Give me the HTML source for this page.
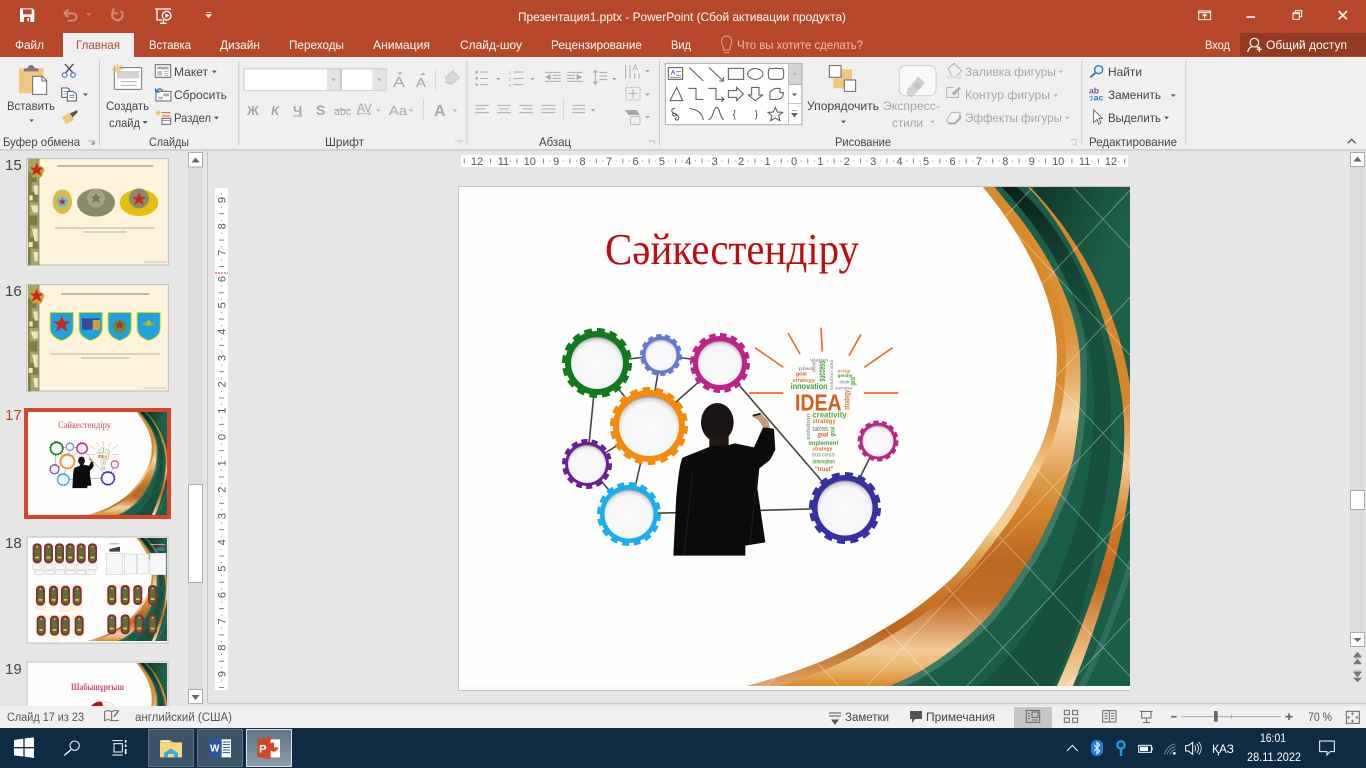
<!DOCTYPE html>
<html lang="ru"><head><meta charset="utf-8"><title>Презентация1.pptx - PowerPoint</title>
<style>
html,body{margin:0;padding:0;width:1366px;height:768px;overflow:hidden;background:#E6E6E6}
svg{display:block;font-family:"Liberation Sans","Noto Sans CJK SC",sans-serif}
.t{font-size:12px;fill:#444}
.g{font-size:12px;fill:#A6A6A6}
.w{font-size:12px;fill:#fff}
.r{font-size:11px;fill:#555;text-anchor:middle;paint-order:stroke;stroke:#fff;stroke-width:3px}
.s{font-size:12px;fill:#555}
</style></head><body>
<svg width="1366" height="768" viewBox="0 0 1366 768" xmlns="http://www.w3.org/2000/svg">
<defs>
<clipPath id="reg"><path d="M983,187 C1015,225 1057,290 1057,355 C1057,400 1048,437 1033,463 C1020,487 1008,510 993,528 C978,548 965,567 947,583 C928,600 908,615 887,627 C866,640 845,652 820,662 C795,672 770,680 747,686 L1130,686 L1130,187Z"/></clipPath>
<clipPath id="c19"><rect x="28" y="663" width="139" height="43"/></clipPath>
<linearGradient id="top" gradientUnits="userSpaceOnUse" x1="1040" y1="200" x2="1122" y2="232"><stop offset="0" stop-color="#113C2C"/><stop offset="1" stop-color="#1D6048"/></linearGradient>
<linearGradient id="dk" gradientUnits="userSpaceOnUse" x1="0" y1="187" x2="0" y2="320"><stop offset="0" stop-color="#0C2119"/><stop offset=".5" stop-color="#123F30"/><stop offset="1" stop-color="#16503C"/></linearGradient>
<linearGradient id="ls" gradientUnits="userSpaceOnUse" x1="0" y1="240" x2="0" y2="500"><stop offset="0" stop-color="#1B5E47"/><stop offset=".4" stop-color="#2F6E58"/><stop offset="1" stop-color="#417963"/></linearGradient>
<linearGradient id="gold" gradientUnits="userSpaceOnUse" x1="0" y1="187" x2="0" y2="686">
<stop offset="0" stop-color="#D98B2D"/><stop offset=".287" stop-color="#DC9238"/><stop offset=".387" stop-color="#E6AE6B"/><stop offset=".457" stop-color="#F6D5A5"/><stop offset=".527" stop-color="#EDB87A"/><stop offset=".587" stop-color="#DD9A48"/><stop offset=".647" stop-color="#D5862B"/><stop offset=".748" stop-color="#BC671F"/><stop offset=".828" stop-color="#C06C26"/><stop offset=".878" stop-color="#D9985F"/><stop offset=".928" stop-color="#F2CD98"/><stop offset=".964" stop-color="#E8B56F"/><stop offset="1" stop-color="#D98B2D"/></linearGradient>
<linearGradient id="strip" gradientUnits="userSpaceOnUse" x1="0" y1="187" x2="0" y2="686">
<stop offset="0" stop-color="#D88A2C"/><stop offset=".387" stop-color="#D88A2C"/><stop offset=".487" stop-color="#E39F50"/><stop offset=".567" stop-color="#F3C88F"/><stop offset=".687" stop-color="#F4CE9A"/><stop offset=".747" stop-color="#DD9A48"/><stop offset=".807" stop-color="#CC7C28"/><stop offset=".888" stop-color="#BD661E"/><stop offset=".948" stop-color="#C9813F"/><stop offset="1" stop-color="#E0A567"/></linearGradient>
<linearGradient id="arc" gradientUnits="userSpaceOnUse" x1="0" y1="187" x2="0" y2="686">
<stop offset="0" stop-color="#D6862B"/><stop offset=".43" stop-color="#D6862B"/><stop offset=".56" stop-color="#F2C78E"/><stop offset=".68" stop-color="#D07A25"/><stop offset=".79" stop-color="#C06A20"/><stop offset=".93" stop-color="#EDB77C"/><stop offset="1" stop-color="#F5D5A5"/></linearGradient>
<radialGradient id="hole" cx=".5" cy=".57" r=".57"><stop offset="0" stop-color="#FBFBFD"/><stop offset=".8" stop-color="#F6F6F9"/><stop offset=".92" stop-color="#D8D8DA"/><stop offset="1" stop-color="#8C8C8C"/></radialGradient>
<linearGradient id="pptb" x1="0" y1="0" x2="0" y2="1"><stop offset="0" stop-color="#5F7585"/><stop offset="1" stop-color="#8C9EAA"/></linearGradient>

<g id="bg">
<rect x="459" y="187" width="671" height="499" fill="#FEFEFD"/>
<g clip-path="url(#reg)">
<rect x="740" y="187" width="390" height="499" fill="#1B5E47"/>
<path d="M1028,187 L1130,187 L1130,387 L1128,380 C1118,310 1075,232 1028,187Z" fill="url(#top)"/>
<path d="M1000,187 L1017,187 C1060,225 1098,290 1108,370 C1115,430 1110,490 1098,530 L1075,530 C1090,480 1098,420 1092,370 C1085,300 1045,230 1000,187Z" fill="url(#dk)"/>
<path d="M1098,530 C1090,590 1075,640 1053,686 L980,686 C1015,655 1055,600 1075,530Z" fill="#164F3B"/>
<path d="M1082,686 C1105,640 1120,600 1132,560" fill="none" stroke="#2E7059" stroke-width="6"/>
<path d="M1030,187 C1075,232 1122,310 1132,400 C1140,480 1115,580 1073,686 L1057,686 C1095,600 1128,500 1124,420 C1118,330 1075,235 1028,187Z" fill="url(#arc)"/>
<path d="M993,187 C1030,225 1075,290 1080,355 C1082,400 1078,430 1073,460 C1068,475 1065,485 1060,497 C1050,520 1040,543 1027,563 C1012,585 1000,605 983,622 C965,640 947,655 927,667 C915,675 903,680 890,686" fill="none" stroke="url(#ls)" stroke-width="13"/>
<path d="M993,187 C1030,225 1075,290 1080,355 C1082,400 1078,430 1073,460 C1068,475 1065,485 1060,497 C1050,520 1040,543 1027,563 C1012,585 1000,605 983,622 C965,640 947,655 927,667 C915,675 903,680 890,686 L740,686 L740,187Z" fill="url(#gold)"/>
<path d="M983,187 C1015,225 1057,290 1057,355 C1057,400 1048,437 1033,463 C1020,487 1008,510 993,528 C978,548 965,567 947,583 C928,600 908,615 887,627 C866,640 845,652 820,662 C795,672 770,680 747,686" fill="none" stroke="url(#strip)" stroke-width="18"/>
<path d="M373,187L839,686M473,187L939,686M573,187L1039,686M673,187L1139,686M773,187L1239,686M873,187L1339,686M973,187L1439,686M1073,187L1539,686M1033,187L567,686M1133,187L667,686M1233,187L767,686M1333,187L867,686M1433,187L967,686M1533,187L1067,686M1633,187L1167,686" stroke="#fff" stroke-opacity=".34" stroke-width="1" fill="none"/>
</g></g>

<g id="art">
<path d="M597,363L661,355L720,363M597,363L649,426M661,355L649,426M720,363L649,426M597,363L587,464M587,464L649,426M587,464L629,514M649,426L629,514M629,514L845,508M720,363L845,508M845,508L878,441" stroke="#454545" stroke-width="1.6" fill="none"/>
<g fill="none"><circle cx="597" cy="363" r="33" stroke="#117A1C" stroke-width="4" pathLength="32" stroke-dasharray="1.200 .8"/><circle cx="661" cy="355" r="19.500" stroke="#6478D8" stroke-width="3" pathLength="28" stroke-dasharray="1.200 .8"/><circle cx="720" cy="363" r="28" stroke="#BE2487" stroke-width="4" pathLength="32" stroke-dasharray="1.200 .8"/><circle cx="649" cy="426" r="37" stroke="#F58A0B" stroke-width="4" pathLength="36" stroke-dasharray="1.200 .8"/><circle cx="587" cy="464" r="23" stroke="#6C1E94" stroke-width="4" pathLength="28" stroke-dasharray="1.200 .8"/><circle cx="629" cy="514" r="30" stroke="#1AAEEE" stroke-width="4" pathLength="32" stroke-dasharray="1.200 .8"/><circle cx="845" cy="508" r="34" stroke="#3730A5" stroke-width="4" pathLength="32" stroke-dasharray="1.200 .8"/><circle cx="878" cy="441" r="19" stroke="#BE2487" stroke-width="3" pathLength="28" stroke-dasharray="1.200 .8"/></g>
<circle cx="597" cy="363" r="32" fill="#117A1C"/><circle cx="597" cy="363" r="26" fill="url(#hole)"/>
<circle cx="661" cy="355" r="19" fill="#6478D8"/><circle cx="661" cy="355" r="15.500" fill="url(#hole)"/>
<circle cx="720" cy="363" r="27" fill="#BE2487"/><circle cx="720" cy="363" r="22" fill="url(#hole)"/>
<circle cx="649" cy="426" r="36" fill="#F58A0B"/><circle cx="649" cy="426" r="30" fill="url(#hole)"/>
<circle cx="587" cy="464" r="22" fill="#6C1E94"/><circle cx="587" cy="464" r="19" fill="url(#hole)"/>
<circle cx="629" cy="514" r="29" fill="#1AAEEE"/><circle cx="629" cy="514" r="24.500" fill="url(#hole)"/>
<circle cx="845" cy="508" r="33" fill="#3730A5"/><circle cx="845" cy="508" r="27.500" fill="url(#hole)"/>
<circle cx="878" cy="441" r="18.500" fill="#BE2487"/><circle cx="878" cy="441" r="15.500" fill="url(#hole)"/>
<g transform="translate(550,315) scale(.33333)">
<path d="M615,98L700,157M714,54L750,117M813,38L817,110M933,58L897,122M1028,98L943,157M597,234H700M942,234H1045" stroke="#F26A2A" stroke-width="5" fill="none"/>
<g font-weight="bold">
<text x="735" y="287" font-size="68" fill="#D2601A" textLength="140" lengthAdjust="spacingAndGlyphs">IDEA</text>
<text x="722" y="222" font-size="24" fill="#3F9A35" textLength="111" lengthAdjust="spacingAndGlyphs">innovation</text>
<text x="787" y="308" font-size="24" fill="#57A83A" textLength="103" lengthAdjust="spacingAndGlyphs">creativity</text>
<text x="727" y="201" font-size="17" fill="#D97A35" textLength="68" lengthAdjust="spacingAndGlyphs">strategy</text>
<text x="738" y="182" font-size="17" fill="#D2601A" textLength="32" lengthAdjust="spacingAndGlyphs">goal</text>
<text x="787" y="324" font-size="18" fill="#D97A35" textLength="70" lengthAdjust="spacingAndGlyphs">strategy</text>
<text x="787" y="348" font-size="22" fill="#888" textLength="48" lengthAdjust="spacingAndGlyphs">success</text>
<text x="803" y="365" font-size="19" fill="#D2601A" textLength="32" lengthAdjust="spacingAndGlyphs">goal</text>
<text x="775" y="390" font-size="18" fill="#4C9E35" textLength="90" lengthAdjust="spacingAndGlyphs">implement</text>
<text x="787" y="406" font-size="16" fill="#D97A35" textLength="60" lengthAdjust="spacingAndGlyphs">strategy</text>
<text x="785" y="424" font-size="20" fill="#A8A8A8" textLength="70" lengthAdjust="spacingAndGlyphs">success</text>
<text x="787" y="446" font-size="20" fill="#57A83A" textLength="68" lengthAdjust="spacingAndGlyphs">innovation</text>
<text x="795" y="468" font-size="20" fill="#D2601A" textLength="55" lengthAdjust="spacingAndGlyphs">"trust"</text>
<text x="863" y="172" font-size="15" fill="#D97A35" textLength="38" lengthAdjust="spacingAndGlyphs">scrap</text>
<text x="863" y="186" font-size="15" fill="#4C9E35" textLength="45" lengthAdjust="spacingAndGlyphs">gender</text>
<text x="780" y="140" font-size="14" fill="#999" textLength="55" lengthAdjust="spacingAndGlyphs">vision</text>
<text x="745" y="165" font-size="14" fill="#999" textLength="45" lengthAdjust="spacingAndGlyphs">plan</text>
<text transform="translate(825,200) rotate(-90)" font-size="30" fill="#3F9A35" textLength="62" lengthAdjust="spacingAndGlyphs">success</text>
<text transform="translate(797,172) rotate(-90)" font-size="16" fill="#999" textLength="36" lengthAdjust="spacingAndGlyphs">vision</text>
<text transform="translate(849,225) rotate(-90)" font-size="15" fill="#999" textLength="90" lengthAdjust="spacingAndGlyphs">solution idea</text>
<text transform="translate(915,212) rotate(-90)" font-size="22" fill="#4C9E35" textLength="26" lengthAdjust="spacingAndGlyphs">goal</text>
<text transform="translate(899,285) rotate(-90)" font-size="24" fill="#D97A35" textLength="60" lengthAdjust="spacingAndGlyphs">strategy</text>
<text transform="translate(780,375) rotate(-90)" font-size="16" fill="#999" textLength="80" lengthAdjust="spacingAndGlyphs">solution</text>
<text transform="translate(854,365) rotate(-90)" font-size="19" fill="#4C9E35" textLength="30" lengthAdjust="spacingAndGlyphs">goal</text>
<text x="868" y="205" font-size="15" fill="#999" textLength="30" lengthAdjust="spacingAndGlyphs">think</text>
<text x="855" y="224" font-size="15" fill="#999" textLength="52" lengthAdjust="spacingAndGlyphs">success</text>
</g>
<ellipse cx="502" cy="322" rx="49" ry="58" fill="#1A1414"/>
<path d="M478,360H536V398H478Z" fill="#211815"/>
<path d="M370,722 L378,560 C382,500 390,440 398,428 L480,395 L500,392 L530,392 L555,385 L612,397 L640,335 L672,342 L676,405 L660,435 L628,460 L622,520 L646,682 L586,692 L586,722Z" fill="#0B0B0D"/>
<path d="M428,470L402,722M622,465L600,690" stroke="#26262A" stroke-width="2" fill="none"/>
<path d="M608,305 L630,293 L655,318 L660,338 L640,338 L625,315Z" fill="#C89A78"/>
<path d="M608,302L632,296" stroke="#222" stroke-width="6"/>
</g></g>

<path id="shield" d="M0,0H70V48C70,70 50,80 35,85C20,80 0,70 0,48Z" fill="#1FA3E0" stroke="#F0E000" stroke-width="3"/>
<path id="star" d="M0,-16L4.5,-5L16,-5L7,2L10.5,14L0,7L-10.5,14L-7,2L-16,-5L-4.5,-5Z"/>
<g id="ep"><rect width="27" height="60" rx="12" fill="#8A2B3C"/><rect x="5" y="6" width="17" height="48" rx="8" fill="#5C6E3A"/><rect x="8" y="40" width="11" height="5" fill="#F1D21F"/><circle cx="13.500" cy="10" r="2.500" fill="#F1D21F"/></g>
<g id="camo"><rect x="84" y="0" width="34" height="320" fill="#A5A468"/><path d="M84,40H110V70H95V100H115V130H88V170H112V200H90V235H116V270H92V320H84Z" fill="#7F803F"/><path d="M100,80H116V108H104ZM92,140H116V162H100ZM96,210H116V248H104ZM100,280H116V308H104ZM88,110H98V125H88ZM86,250H98V265H86Z" fill="#EFE6C0"/><rect x="113" y="0" width="5" height="320" fill="#8C8C78" opacity=".7"/><path d="M88,32L110,12L134,32L124,56H98Z" fill="#C9A13A"/><use href="#star" transform="translate(110,33) scale(1.300)" fill="#C8291E"/></g>
</defs>

<rect width="1366" height="768" fill="#E6E6E6"/>

<!-- title bar -->
<rect width="1366" height="57" fill="#B7472A"/>
<rect x="1240" y="33" width="126" height="23" fill="#923A22"/>
<rect y="57" width="1366" height="92" fill="#F0F0F0"/>
<rect x="63" y="33" width="71" height="25" fill="#F0F0F0"/>
<rect y="149" width="1366" height="2" fill="#D2D2D2"/>

<text class="w" x="518" y="21" textLength="328" lengthAdjust="spacingAndGlyphs">Презентация1.pptx - PowerPoint (Сбой активации продукта)</text>
<text class="w" x="15" y="49" textLength="29" lengthAdjust="spacingAndGlyphs">Файл</text>
<text x="76" y="49" font-size="12" fill="#B7472A" textLength="44" lengthAdjust="spacingAndGlyphs">Главная</text>
<text class="w" x="149" y="49" textLength="42" lengthAdjust="spacingAndGlyphs">Вставка</text>
<text class="w" x="220" y="49" textLength="40" lengthAdjust="spacingAndGlyphs">Дизайн</text>
<text class="w" x="289" y="49" textLength="55" lengthAdjust="spacingAndGlyphs">Переходы</text>
<text class="w" x="373" y="49" textLength="57" lengthAdjust="spacingAndGlyphs">Анимация</text>
<text class="w" x="460" y="49" textLength="62" lengthAdjust="spacingAndGlyphs">Слайд-шоу</text>
<text class="w" x="551" y="49" textLength="91" lengthAdjust="spacingAndGlyphs">Рецензирование</text>
<text class="w" x="671" y="49" textLength="20" lengthAdjust="spacingAndGlyphs">Вид</text>
<text x="737" y="49" font-size="12" fill="#EBBFB0" textLength="126" lengthAdjust="spacingAndGlyphs">Что вы хотите сделать?</text>
<text class="w" x="1205" y="49" textLength="25" lengthAdjust="spacingAndGlyphs">Вход</text>
<text class="w" x="1266" y="49" textLength="81" lengthAdjust="spacingAndGlyphs">Общий доступ</text>

<!-- left ribbon icons, zoom coords -->
<g transform="scale(.33333)">
<path d="M60,25H97L103,31V66H60Z" fill="#fff"/><rect x="69" y="28" width="26" height="15" fill="#B7472A"/><rect x="72" y="51" width="19" height="15" fill="#B7472A"/><rect x="82" y="54" width="5" height="10" fill="#fff"/>
<path d="M192,40H215C235,40 235,62 215,62H203M192,40L205,28M192,40L205,51" fill="none" stroke="#D48970" stroke-width="6"/>
<path d="M258,40H274L266,48Z" fill="#CF8066"/>
<path d="M362,32A16,16 0 1 1 340,34M340,25V40H355" fill="none" stroke="#D48970" stroke-width="6"/>
<path d="M465,27H513M471,27V60H486M480,70H500M490,60V70" fill="none" stroke="#fff" stroke-width="4"/><circle cx="500" cy="47" r="13" fill="#B7472A" stroke="#fff" stroke-width="4"/><path d="M496,40L508,47L496,54Z" fill="#fff"/>
<path d="M618,37H634M618,44H634L626,53Z" fill="#fff" stroke="#fff" stroke-width="2"/>
<!-- paste -->
<rect x="57" y="205" width="73" height="75" fill="#EFC77F"/><path d="M72,205H83Q85,195 93,195Q102,195 104,205H115V214H72Z" fill="#7B7B7B"/>
<path d="M98,229H127L140,242V283H98Z" fill="#fff" stroke="#6A6A6A" stroke-width="3"/><path d="M126,229V243H140" fill="none" stroke="#6A6A6A" stroke-width="3"/>
<path d="M88,358H102L95,366Z" fill="#555"/>
<!-- scissors -->
<path d="M195,192L218,218M220,192L197,218" stroke="#5A5A5A" stroke-width="4.500"/><circle cx="194" cy="225" r="7" fill="none" stroke="#3C7FC0" stroke-width="3.500"/><circle cx="219" cy="225" r="7" fill="none" stroke="#3C7FC0" stroke-width="3.500"/>
<!-- copy -->
<path d="M185,264H203L209,270V292H185Z" fill="#fff" stroke="#555" stroke-width="3"/><path d="M202,274H220L229,282V303H202Z" fill="#fff" stroke="#555" stroke-width="3"/><path d="M190,274H200M190,282H198M208,286H223M208,292H223" stroke="#3C7FC0" stroke-width="2.500"/>
<path d="M249,280H264L256,288Z" fill="#555"/>
<!-- painter -->
<path d="M184,351L212,337L222,360L198,372Z" fill="#EFC77F"/><path d="M210,340L232,330L232,338L218,352Z" fill="#555"/>
<!-- new slide -->
<rect x="343" y="203" width="82" height="65" rx="2" fill="#fff" stroke="#767676" stroke-width="3"/><rect x="351" y="213" width="67" height="22" fill="#D4D4D4"/><path d="M362,245H410M362,256H410" stroke="#A8A8A8" stroke-width="2.500"/>
<g stroke="#EDBE6A" stroke-width="3.500"><path d="M352,190V224M335,207H369M340,195L364,219M364,195L340,219"/></g><circle cx="352" cy="207" r="7" fill="#F3D08C"/>
<path d="M428,363H443L435,372Z" fill="#555"/>
<!-- layout/reset/section -->
<rect x="466" y="194" width="46" height="38" fill="#fff" stroke="#666" stroke-width="3"/><rect x="472" y="200" width="34" height="8" fill="#A9A9A9"/><path d="M472,213H486V227H472Z" fill="#BEBEBE"/><path d="M491,214H506M491,220H506M491,226H506" stroke="#999" stroke-width="2"/>
<path d="M636,212H650L643,220Z" fill="#555"/>
<rect x="468" y="274" width="45" height="29" fill="#fff" stroke="#666" stroke-width="3"/><rect x="490" y="281" width="17" height="8" fill="#AAA"/><rect x="475" y="290" width="14" height="8" fill="#BBB"/><path d="M488,272C480,262 472,268 469,274M466,265L468,277L480,274" fill="none" stroke="#2E75B6" stroke-width="4"/>
<path d="M466,338H484M475,329V347M469,332L481,344M481,332L469,344" stroke="#EDBE6A" stroke-width="2.500"/><path d="M486,338H512" stroke="#D2602A" stroke-width="3"/><path d="M486,348H512" stroke="#D2602A" stroke-width="3"/><rect x="486" y="355" width="26" height="18" fill="#fff" stroke="#666" stroke-width="3"/><path d="M486,361H512" stroke="#666" stroke-width="2"/>
<path d="M642,350H657L649,358Z" fill="#555"/>
<!-- seps -->
<g fill="#C8C8C8"><rect x="297" y="183" width="3" height="252"/><rect x="715" y="183" width="3" height="252"/></g>
<path d="M265,423H283V433H273" fill="none" stroke="#888" stroke-width="2"/><path d="M274,432L283,423V432Z" fill="#888"/>
<!-- font group -->
<rect x="730" y="205" width="430" height="67" fill="#C6C6C6"/><rect x="733" y="208" width="248" height="62" fill="#fff"/><rect x="981" y="208" width="40" height="62" fill="#E4E4E4"/><rect x="1026" y="208" width="92" height="62" fill="#fff"/><rect x="1118" y="208" width="40" height="62" fill="#E4E4E4"/>
<path d="M994,236H1008L1001,243ZM1131,236H1145L1138,243Z" fill="#A8A8A8"/>
<path d="M1200,225L1208,217H1192ZM1269,217L1277,225H1261Z" fill="#B0B0B0"/>
<rect x="1306" y="205" width="2" height="65" fill="#CCC"/>
<path d="M1336,232L1358,212L1378,232L1358,252H1345Z" fill="#D8D8D8" stroke="#BBB" stroke-width="2"/><path d="M1334,247H1350" stroke="#C8C8C8" stroke-width="3"/>
<rect x="1269" y="297" width="2" height="65" fill="#CCC"/>
<path d="M1128,328H1142L1135,336ZM1226,328H1240L1233,336ZM1358,328H1372L1365,336Z" fill="#B8B8B8"/>
<path d="M1071,340H1112M1071,340L1079,334M1071,340L1079,346M1112,340L1104,334M1112,340L1104,346" stroke="#A8A8A8" stroke-width="2" fill="none"/>
<path d="M880,348H908" stroke="#9A9A9A" stroke-width="3"/>
<path d="M1365,423H1380V433" fill="none" stroke="#BBB" stroke-width="2"/>
</g>

<text class="t" x="7" y="110" textLength="48" lengthAdjust="spacingAndGlyphs">Вставить</text>
<text class="t" x="106" y="110" textLength="43" lengthAdjust="spacingAndGlyphs">Создать</text>
<text class="t" x="109" y="127" textLength="31" lengthAdjust="spacingAndGlyphs">слайд</text>
<text class="t" x="174" y="76" textLength="34" lengthAdjust="spacingAndGlyphs">Макет</text>
<text class="t" x="174" y="99" textLength="53" lengthAdjust="spacingAndGlyphs">Сбросить</text>
<text class="t" x="174" y="122" textLength="37" lengthAdjust="spacingAndGlyphs">Раздел</text>
<text class="t" x="3" y="146" textLength="77" lengthAdjust="spacingAndGlyphs">Буфер обмена</text>
<text class="t" x="149" y="146" textLength="40" lengthAdjust="spacingAndGlyphs">Слайды</text>
<text class="t" x="325" y="146" textLength="39" lengthAdjust="spacingAndGlyphs">Шрифт</text>
<text class="t" x="539" y="146" textLength="32" lengthAdjust="spacingAndGlyphs">Абзац</text>
<text class="t" x="835" y="146" textLength="56" lengthAdjust="spacingAndGlyphs">Рисование</text>
<text class="t" x="1089" y="146" textLength="88" lengthAdjust="spacingAndGlyphs">Редактирование</text>

<g fill="#A6A6A6">
<text x="393" y="87" font-size="15" textLength="12" lengthAdjust="spacingAndGlyphs">A</text>
<text x="416" y="87" font-size="13" textLength="10" lengthAdjust="spacingAndGlyphs">A</text>
<text x="247" y="115" font-size="13" font-weight="bold">Ж</text>
<text x="271" y="115" font-size="13" font-weight="bold" font-style="italic">К</text>
<text x="293" y="115" font-size="13" font-weight="bold">Ч</text>
<text x="316" y="115" font-size="14" font-weight="bold">S</text>
<text x="334" y="115" font-size="11" textLength="17" lengthAdjust="spacingAndGlyphs">abc</text>
<text x="357" y="112" font-size="12" textLength="15" lengthAdjust="spacingAndGlyphs">AV</text>
<text x="389" y="115" font-size="13" textLength="18" lengthAdjust="spacingAndGlyphs">Аа</text>
<text x="434" y="116" font-size="16" font-weight="bold">А</text>
</g>
<path d="M334,110H351" stroke="#A6A6A6"/>

<!-- middle ribbon, zoom2 coords -->
<g transform="translate(460,0) scale(.33333)" fill="none">
<g stroke="#ABABAB" stroke-width="3">
<path d="M60,216H85M60,235H85M60,254H85M160,216H190M160,235H190M160,254H190"/>
<path d="M255,217H302M278,226H302M278,235H302M255,244H302M321,217H368M321,226H345M321,235H345M321,244H368"/>
<path d="M418,217H442M418,228H442M418,239H442M406,218V255"/>
<path d="M46,316H88M46,327H76M46,338H88M112,316H152M118,327H146M112,338H152M178,316H218M188,327H218M178,338H218M244,316H286M244,327H286M244,338H286M337,316H375M337,327H375M337,338H375"/>
<path d="M497,195V235M510,195V235M524,220V235M537,220V235"/>
<path d="M498,262H540V300H498Z" stroke-dasharray="4 3"/><path d="M506,280H532M519,268V296"/>
</g>
<g fill="#A9A9A9"><circle cx="50" cy="216" r="4"/><circle cx="50" cy="235" r="4"/><circle cx="50" cy="254" r="4"/><path d="M256,231L272,222V240ZM366,231L350,222V240Z"/><path d="M398,218L406,208L414,218ZM398,245L406,255L414,245Z"/><path d="M108,234H122L115,242ZM210,234H224L217,242ZM456,234H470L463,242ZM555,210H570L562,218ZM555,280H570L562,288ZM555,348H570L562,356ZM392,327H406L399,335Z"/>
<path d="M495,330H530L540,345H505Z"/><rect x="512" y="350" width="28" height="23" fill="#EEE" stroke="#A9A9A9" stroke-width="2"/></g>
<text x="146" y="222" font-size="14" fill="#A9A9A9">1</text><text x="146" y="242" font-size="14" fill="#A9A9A9">2</text><text x="146" y="261" font-size="14" fill="#A9A9A9">3</text>
<text x="517" y="212" font-size="26" fill="#A9A9A9">A</text>
<rect x="310" y="297" width="2" height="65" fill="#CCC"/>
<rect x="19" y="183" width="3" height="252" fill="#C8C8C8"/><rect x="597" y="183" width="3" height="252" fill="#C8C8C8"/>
<path d="M565,423H583V433M0,423H8" stroke="#AAA" stroke-width="2"/>
<!-- gallery -->
<rect x="616" y="190" width="410" height="184" fill="#fff" stroke="#ABABAB" stroke-width="3"/>
<rect x="985" y="190" width="40" height="64" fill="#D4D4D4" stroke="#ABABAB" stroke-width="2"/><rect x="985" y="254" width="40" height="56" fill="#fff" stroke="#ABABAB" stroke-width="2"/><rect x="985" y="310" width="40" height="64" fill="#fff" stroke="#ABABAB" stroke-width="2"/>
<path d="M998,224L1005,216L1012,224Z" fill="#B8B8B8"/><path d="M996,280H1011L1003,289Z" fill="#666"/><path d="M995,331H1012M995,340H1012L1003,351Z" fill="#666" stroke="#666" stroke-width="2"/>
<g stroke="#555" stroke-width="3">
<rect x="625" y="203" width="43" height="35"/>
<path d="M648,226H663M630,233H663M648,215H663" stroke-width="2"/>
<path d="M688,203L730,243M747,203L790,243M778,243H790V231"/>
<rect x="805" y="205" width="46" height="33"/><ellipse cx="886" cy="222" rx="23" ry="16"/><rect x="925" y="205" width="46" height="33" rx="8"/>
<path d="M630,302L650,262L668,302Z"/><path d="M685,265H708V298H730M745,265H768V298H792M784,291L792,298L784,305"/>
<path d="M805,272H830V262L850,282L830,302V292H805Z"/><path d="M875,262H897V285H908L886,302L865,285H875Z"/>
<path d="M930,298V275L945,265H960V278H970Q970,298 950,298Z"/>
<path d="M645,325C632,325 632,338 645,340C660,345 642,352 638,345C634,335 662,345 655,358C650,364 642,358 650,352"/>
<path d="M688,325Q725,330 730,360M745,358C760,358 760,322 770,322C780,322 780,358 792,358"/>
<path d="M946,322L952,336L968,337L956,347L960,362L946,354L932,362L936,347L924,337L940,336Z"/>
</g>
<text x="632" y="224" font-size="20" font-weight="bold" fill="#3C6FC0">A</text>
<text x="818" y="353" font-size="30" fill="#444">{</text><text x="884" y="353" font-size="30" fill="#444">}</text>
<!-- arrange -->
<rect x="1143" y="208" width="33" height="30" fill="#EFC77F"/><rect x="1120" y="235" width="33" height="30" fill="#EFC77F"/><rect x="1108" y="197" width="35" height="35" fill="#fff" stroke="#666" stroke-width="3"/><rect x="1153" y="240" width="34" height="34" fill="#fff" stroke="#666" stroke-width="3"/>
<path d="M1143,362H1158L1150,370Z" fill="#555"/>
<!-- express -->
<rect x="1318" y="197" width="110" height="90" rx="18" fill="#F8F8F8" stroke="#CFCFCF" stroke-width="3"/>
</g>
<text class="t" x="807" y="110" textLength="72" lengthAdjust="spacingAndGlyphs">Упорядочить</text>
<text class="g" x="883" y="110" textLength="57" lengthAdjust="spacingAndGlyphs">Экспресс-</text>
<text class="g" x="892" y="127" textLength="31" lengthAdjust="spacingAndGlyphs">стили</text>
<text class="g" x="965" y="76" textLength="91" lengthAdjust="spacingAndGlyphs">Заливка фигуры</text>
<text class="g" x="965" y="99" textLength="85" lengthAdjust="spacingAndGlyphs">Контур фигуры</text>
<text class="g" x="965" y="122" textLength="97" lengthAdjust="spacingAndGlyphs">Эффекты фигуры</text>
<text class="t" x="1108" y="76" textLength="34" lengthAdjust="spacingAndGlyphs">Найти</text>
<text class="t" x="1108" y="99" textLength="53" lengthAdjust="spacingAndGlyphs">Заменить</text>
<text class="t" x="1108" y="122" textLength="53" lengthAdjust="spacingAndGlyphs">Выделить</text>

<!-- right ribbon, zoom3 coords -->
<g transform="translate(910,0) scale(.33333)" fill="none">
<path d="M-10,270L25,230L45,248L10,288Z" fill="#D0D0D0"/><path d="M-10,275L5,290" stroke="#C0C0C0" stroke-width="5"/>
<circle cx="24" cy="258" r="10" fill="#C4C4C4"/>
<path d="M60,362H74L67,370Z" fill="#BBB"/>
<path d="M115,205L132,190L155,212L140,228H125Z" stroke="#B0B0B0" stroke-width="3"/><rect x="108" y="226" width="48" height="10" fill="#E0E0E0"/>
<path d="M445,212H460L452,220ZM430,283H445L437,291ZM465,350H480L472,358Z" fill="#BBB"/>
<path d="M110,292V262H130M110,292H145V275" stroke="#B0B0B0" stroke-width="3"/><path d="M125,280L147,260L153,266L132,287Z" fill="#B0B0B0"/>
<path d="M110,360L125,337H150V355L135,370H115Z" fill="#F2F2F2" stroke="#B8B8B8" stroke-width="3"/><path d="M115,370H135L150,355V345" stroke="#AAA" stroke-width="6"/>
<rect x="514" y="183" width="3" height="252" fill="#C8C8C8"/><rect x="826" y="183" width="3" height="252" fill="#C8C8C8"/>
<path d="M480,418H498V434H488" stroke="#BBB" stroke-width="2"/>
<circle cx="566" cy="209" r="12" stroke="#3C7FC0" stroke-width="4.500"/><path d="M557,218L541,232" stroke="#3C7FC0" stroke-width="6"/>
<text x="537" y="281" font-size="26" font-weight="bold" fill="#7B4FA6">ab</text>
<text x="551" y="302" font-size="26" font-weight="bold" fill="#2E75B6">ac</text>
<path d="M538,292L546,288V300H540" stroke="#2E75B6" stroke-width="2"/>
<path d="M782,283H797L790,291ZM762,350H777L770,358Z" fill="#555"/>
<path d="M551,330V368L561,358L566,372L573,368L567,355H577Z" fill="#fff" stroke="#555" stroke-width="2.500"/>
<path d="M1313,430L1325,418L1337,430" stroke="#555" stroke-width="4"/>
<!-- window -->
<rect x="866" y="33" width="36" height="26" stroke="#fff" stroke-width="3"/><path d="M866,38H902" stroke="#fff" stroke-width="3"/><path d="M884,56V43M877,49L884,42L891,49" stroke="#fff" stroke-width="3"/>
<path d="M1009,51H1035" stroke="#fff" stroke-width="5"/>
<path d="M1156,37V32H1175V50H1166" stroke="#fff" stroke-width="3"/><rect x="1149" y="38" width="19" height="20" stroke="#fff" stroke-width="3"/><path d="M1149,41H1168" stroke="#fff" stroke-width="3"/>
<path d="M1286,33L1311,58M1311,33L1286,58" stroke="#fff" stroke-width="5"/>
<circle cx="1033" cy="128" r="13" stroke="#fff" stroke-width="3.500"/><path d="M1013,156C1015,145 1022,140 1028,140M1040,140C1045,142 1048,145 1049,146M1040,148H1056M1048,140V156" stroke="#fff" stroke-width="3.500"/>
</g>

<!-- lightbulb -->
<g transform="translate(460,0) scale(.33333)" fill="none" stroke="#E4A695" stroke-width="3"><path d="M790,140C780,125 785,108 800,108C815,108 820,125 810,140V150H790ZM792,158H808"/></g>

<!-- rulers -->
<rect x="461" y="155" width="667" height="12" fill="#fff"/>
<rect x="215" y="188" width="13" height="502" fill="#fff"/>
<g stroke="#8A8A8A" fill="none">
<path d="M463.75,161H1128" stroke-dasharray="1 5.605"/>
<path d="M463.75,161H1128" stroke-width="5" stroke-dasharray="1 25.42"/>
<path d="M221.500,193.500V690" stroke-dasharray="1 5.58"/>
<path d="M221.500,213.300V690" stroke-width="5" stroke-dasharray="1 25.32"/>
</g>
<g>
<text class="r" x="477" y="165">12</text><text class="r" x="503.4" y="165">11</text><text class="r" x="529.8" y="165">10</text><text class="r" x="556.2" y="165">9</text><text class="r" x="582.6" y="165">8</text><text class="r" x="609" y="165">7</text><text class="r" x="635.5" y="165">6</text><text class="r" x="661.9" y="165">5</text><text class="r" x="688.3" y="165">4</text><text class="r" x="714.7" y="165">3</text><text class="r" x="741.2" y="165">2</text><text class="r" x="767.6" y="165">1</text><text class="r" x="794" y="165">0</text><text class="r" x="820.4" y="165">1</text><text class="r" x="846.8" y="165">2</text><text class="r" x="873.2" y="165">3</text><text class="r" x="899.6" y="165">4</text><text class="r" x="926" y="165">5</text><text class="r" x="952.5" y="165">6</text><text class="r" x="978.9" y="165">7</text><text class="r" x="1005.3" y="165">8</text><text class="r" x="1031.7" y="165">9</text><text class="r" x="1058.2" y="165">10</text><text class="r" x="1084.6" y="165">11</text><text class="r" x="1111" y="165">12</text>
<text class="r" transform="translate(225.500,200) rotate(-90)">9</text><text class="r" transform="translate(225.500,226.300) rotate(-90)">8</text><text class="r" transform="translate(225.500,252.700) rotate(-90)">7</text><text class="r" transform="translate(225.500,279) rotate(-90)">6</text><text class="r" transform="translate(225.500,305.300) rotate(-90)">5</text><text class="r" transform="translate(225.500,331.700) rotate(-90)">4</text><text class="r" transform="translate(225.500,358) rotate(-90)">3</text><text class="r" transform="translate(225.500,384.300) rotate(-90)">2</text><text class="r" transform="translate(225.500,410.700) rotate(-90)">1</text><text class="r" transform="translate(225.500,437) rotate(-90)">0</text><text class="r" transform="translate(225.500,463.300) rotate(-90)">1</text><text class="r" transform="translate(225.500,489.700) rotate(-90)">2</text><text class="r" transform="translate(225.500,516) rotate(-90)">3</text><text class="r" transform="translate(225.500,542.300) rotate(-90)">4</text><text class="r" transform="translate(225.500,568.700) rotate(-90)">5</text><text class="r" transform="translate(225.500,595) rotate(-90)">6</text><text class="r" transform="translate(225.500,621.300) rotate(-90)">7</text><text class="r" transform="translate(225.500,647.700) rotate(-90)">8</text><text class="r" transform="translate(225.500,674) rotate(-90)">9</text>
</g>
<path d="M215,273H228" stroke="#C0392B" stroke-dasharray="2 1"/>

<!-- main slide -->
<rect x="458" y="186" width="672" height="504" fill="#FAFAFA"/>
<path d="M458,186.500H1130M458.500,186V690M458,690.500H1130" stroke="#C6C6C6" fill="none"/>
<use href="#bg"/>
<text x="605" y="264" font-family="Liberation Serif,serif" font-size="44" fill="#BC0E12" textLength="254" lengthAdjust="spacingAndGlyphs">Сәйкестендіру</text>
<use href="#art"/>

<!-- panel dividers -->
<rect x="207" y="151" width="1" height="552" fill="#C6C6C6"/>
<rect x="208" y="703" width="1158" height="1" fill="#C6C6C6"/>

<!-- thumbs scrollbar -->
<rect x="188" y="152" width="15" height="552" fill="#DCDCDC"/>
<rect x="188.500" y="152.500" width="14" height="14.500" fill="#fff" stroke="#ABABAB"/><path d="M191.500,162.500L195.500,157.500L199.500,162.500Z" fill="#666"/>
<rect x="188.500" y="484.500" width="14" height="98" fill="#fff" stroke="#ABABAB"/>
<rect x="188.500" y="689.500" width="14" height="14" fill="#fff" stroke="#ABABAB"/><path d="M191.500,695L195.500,700L199.500,695Z" fill="#666"/>

<!-- right scrollbar -->
<rect x="1350" y="152" width="15" height="481" fill="#DCDCDC"/>
<rect x="1350.500" y="152.500" width="14" height="14" fill="#fff" stroke="#ABABAB"/><path d="M1353.500,161.500L1357.500,156.500L1361.500,161.500Z" fill="#666"/>
<rect x="1350.500" y="490.500" width="14" height="19" fill="#fff" stroke="#ABABAB"/>
<rect x="1350.500" y="632.500" width="14" height="14" fill="#fff" stroke="#ABABAB"/><path d="M1353.500,638L1357.500,642L1361.500,638Z" fill="#666"/>
<path d="M1354,658H1361M1357.500,652L1353.500,657H1361.500ZM1353.500,664L1357.500,659L1361.500,664Z" fill="#777" stroke="#777" stroke-width=".5"/>
<path d="M1354,671H1361M1353.500,672L1357.500,677L1361.500,672ZM1353.500,678L1357.500,682L1361.500,678Z" fill="#777" stroke="#777" stroke-width=".5"/>

<!-- numbers -->
<g font-size="15" fill="#444">
<text x="5" y="170">15</text><text x="5" y="296">16</text><text x="5" y="420" fill="#C8401F">17</text><text x="5" y="548">18</text><text x="5" y="674">19</text>
</g>

<!-- thumb 15 -->
<g transform="translate(0,150) scale(.33333)">
<rect x="80" y="26" width="425" height="319" fill="#FEF4DC" stroke="#BDBDBD" stroke-width="3"/>
<g transform="translate(0,26)"><use href="#camo"/></g>
<rect x="172" y="46" width="288" height="4" fill="#5A5240" opacity=".55"/>
<ellipse cx="187" cy="155" rx="29" ry="37" fill="#D6BC45"/><circle cx="187" cy="155" r="16" fill="#6FB8D8"/><use href="#star" transform="translate(187,155) scale(.7)" fill="#C8291E"/>
<ellipse cx="288" cy="158" rx="57" ry="42" fill="#8B8A6A"/><circle cx="288" cy="145" r="27" fill="#A4A388"/><use href="#star" transform="translate(288,145)" fill="#77765A"/>
<ellipse cx="417" cy="158" rx="58" ry="40" fill="#E5BE10"/><circle cx="417" cy="145" r="30" fill="#8B8A6A"/><use href="#star" transform="translate(417,147) scale(1.300)" fill="#C8291E"/>
<rect x="165" y="232" width="300" height="4" fill="#888" opacity=".45"/><rect x="250" y="244" width="130" height="4" fill="#888" opacity=".45"/>
<rect x="432" y="335" width="68" height="2" fill="#666" opacity=".5"/>
</g>
<!-- thumb 16 -->
<g transform="translate(0,150) scale(.33333)">
<rect x="80" y="404" width="425" height="319" fill="#FEF4DC" stroke="#BDBDBD" stroke-width="3"/>
<g transform="translate(0,404)"><use href="#camo"/></g>
<rect x="183" y="430" width="265" height="4" fill="#5A5240" opacity=".55"/>
<use href="#shield" x="150" y="487"/><use href="#shield" x="237" y="487"/><use href="#shield" x="324" y="487"/><use href="#shield" x="411" y="487"/>
<use href="#star" transform="translate(185,522) scale(1.600)" fill="#C8291E"/>
<rect x="246" y="505" width="52" height="34" fill="#3A4A9A"/><rect x="278" y="510" width="22" height="30" fill="#C8A040"/>
<circle cx="359" cy="530" r="20" fill="#6A8A40"/><use href="#star" transform="translate(359,525) scale(.9)" fill="#C8291E"/>
<path d="M425,525Q446,505 467,525Q446,532 425,525Z" fill="#8AB040"/><circle cx="446" cy="518" r="7" fill="#D4B040"/>
<rect x="150" y="610" width="330" height="4" fill="#888" opacity=".45"/><rect x="243" y="622" width="145" height="4" fill="#888" opacity=".45"/>
<rect x="430" y="713" width="68" height="2" fill="#666" opacity=".5"/>
</g>

<!-- thumb 17 -->
<rect x="24" y="408" width="147" height="111" fill="#D2472A"/>
<rect x="28" y="412" width="139" height="103" fill="#fff"/>
<g transform="translate(28,412) scale(.2072,.2064) translate(-459,-187)"><use href="#bg"/><use href="#art"/></g>
<text x="58" y="428" font-family="Liberation Serif,serif" font-size="9" fill="#C0505A" textLength="53" lengthAdjust="spacingAndGlyphs">Сәйкестендіру</text>

<!-- thumb 18 -->
<rect x="27" y="537" width="141" height="106" fill="#fff" stroke="#BDBDBD"/>
<g transform="translate(28,538) scale(.2072,.2064) translate(-459,-187)"><use href="#bg"/></g>
<g transform="translate(0,440) scale(.33333)">
<g fill="#FBF3DC"><rect x="104" y="432" width="35" height="78"/><rect x="144" y="432" width="33" height="70"/><rect x="178" y="432" width="34" height="84"/><rect x="214" y="432" width="34" height="80"/><rect x="318" y="432" width="34" height="68"/><rect x="358" y="432" width="34" height="68"/><rect x="106" y="524" width="34" height="68"/><rect x="146" y="524" width="34" height="80"/><rect x="178" y="524" width="34" height="68"/><rect x="216" y="524" width="40" height="68"/></g>
<use href="#ep" x="98" y="310"/><use href="#ep" x="132" y="310"/><use href="#ep" x="165" y="310"/><use href="#ep" x="197" y="310"/><use href="#ep" x="230" y="310"/><use href="#ep" x="264" y="310"/>
<use href="#ep" x="108" y="437"/><use href="#ep" x="147" y="437"/><use href="#ep" x="183" y="437"/><use href="#ep" x="218" y="437"/>
<use href="#ep" x="322" y="435"/><use href="#ep" x="362" y="435"/><use href="#ep" x="400" y="435"/><use href="#ep" x="444" y="435"/>
<use href="#ep" x="110" y="527"/><use href="#ep" x="150" y="527"/><use href="#ep" x="182" y="527"/><use href="#ep" x="224" y="527"/>
<use href="#ep" x="322" y="523"/><use href="#ep" x="362" y="523"/><use href="#ep" x="404" y="523"/><use href="#ep" x="444" y="523"/>
<g fill="#F7F7F7" stroke="#D2D2D2" stroke-width="2"><rect x="98" y="372" width="27" height="16"/><rect x="132" y="372" width="27" height="16"/><rect x="165" y="372" width="27" height="16"/><rect x="197" y="372" width="27" height="16"/><rect x="230" y="372" width="27" height="16"/><rect x="264" y="372" width="27" height="16"/>
<rect x="104" y="392" width="28" height="11"/><rect x="138" y="392" width="24" height="11"/><rect x="166" y="392" width="28" height="11"/><rect x="196" y="392" width="28" height="11"/><rect x="228" y="392" width="28" height="11"/><rect x="258" y="392" width="28" height="11"/>
<rect x="320" y="340" width="48" height="64"/><rect x="374" y="342" width="36" height="60"/><rect x="412" y="342" width="34" height="60"/><rect x="450" y="340" width="48" height="64"/></g>
<path d="M328,327L360,320V335H328Z" fill="#444"/><path d="M462,327L488,318L495,333H462Z" fill="#4A7090"/>
<rect x="328" y="310" width="30" height="3" fill="#E88"/><rect x="450" y="312" width="46" height="3" fill="#E88"/>
</g>

<!-- thumb 19 -->
<rect x="27" y="662" width="141" height="46" fill="#fff" stroke="#BDBDBD"/>
<g clip-path="url(#c19)"><g transform="translate(28,663) scale(.2072,.2064) translate(-459,-187)"><use href="#bg"/></g>
<text x="71" y="690" font-family="Liberation Serif,serif" font-size="9" font-weight="bold" fill="#CC4A82" textLength="53" lengthAdjust="spacingAndGlyphs">Шабышұрғыш</text>
<path d="M91,706Q97,700 102,702L103,706Z" fill="#B01818"/><path d="M103,702Q110,701 114,706" fill="none" stroke="#DDD"/></g>

<!-- status bar -->
<rect y="706" width="1366" height="22" fill="#F0F0F0"/>
<rect x="1014" y="707" width="38" height="21" fill="#C6C6C6"/>
<text x="7" y="721" font-size="11.500" fill="#555" textLength="77" lengthAdjust="spacingAndGlyphs">Слайд 17 из 23</text>
<text x="135" y="721" font-size="11.500" fill="#555" textLength="97" lengthAdjust="spacingAndGlyphs">английский (США)</text>
<text x="845" y="721" font-size="11.500" fill="#444" textLength="44" lengthAdjust="spacingAndGlyphs">Заметки</text>
<text x="926" y="721" font-size="11.500" fill="#444" textLength="69" lengthAdjust="spacingAndGlyphs">Примечания</text>
<text x="1308" y="721" font-size="11.500" fill="#555" textLength="24" lengthAdjust="spacingAndGlyphs">70 %</text>
<g transform="translate(0,700) scale(.33333)" fill="none" stroke="#666" stroke-width="3">
<path d="M335,35V62C325,58 320,58 314,62V35C320,31 328,31 335,35ZM335,35C342,31 350,31 356,33M335,62H356" /><path d="M342,50L356,32" stroke-width="4"/>
</g>
<path d="M829,713H841M829,716H841M832,720L835,724L838,720Z" fill="#555" stroke="#555"/>
<path d="M910,711H922V719H915L912,723V719H910Z" fill="#555"/>
<g transform="translate(966,700) scale(.33333)" fill="none" stroke="#666" stroke-width="3">
<rect x="181" y="31" width="40" height="36"/><rect x="198" y="36" width="18" height="16"/><path d="M186,40H192M186,48H192M186,56H192M198,60H216"/>
<rect x="295" y="31" width="15" height="13"/><rect x="320" y="31" width="15" height="13"/><rect x="295" y="54" width="15" height="13"/><rect x="320" y="54" width="15" height="13"/>
<path d="M410,32H430V66H410ZM430,32H450V66H430ZM415,40H425M415,48H425M415,56H425M435,40H445M435,48H445M435,56H445"/>
<path d="M522,34H560M527,34V54H555V34M541,54V68M530,68H552"/>
<path d="M615,50H632M958,50H980M969,40V60" stroke-width="5"/>
<path d="M645,50H945" stroke="#A0A0A0" stroke-width="2.500"/><path d="M796,43V57" stroke="#A0A0A0" stroke-width="2"/>
<rect x="744" y="33" width="11" height="32" fill="#666" stroke="none"/>
<rect x="1141" y="34" width="39" height="36"/><path d="M1160,38V46M1156,42L1160,38L1164,42M1160,66V58M1156,62L1160,66L1164,62M1145,52H1153M1149,48L1145,52L1149,56M1176,52H1168M1172,48L1176,52L1172,56" stroke-width="2"/>
</g>

<!-- taskbar -->
<rect y="728" width="1366" height="40" fill="#0F2B43"/>
<rect x="148.500" y="729.500" width="45" height="37" fill="#3D5368" stroke="#5C7184"/>
<rect x="197.500" y="729.500" width="45" height="37" fill="#3D5368" stroke="#5C7184"/>
<rect x="246.500" y="729.500" width="45" height="37" fill="url(#pptb)" stroke="#DDE3E8"/>
<g transform="translate(0,700) scale(.33333)">
<path d="M42,120L70,116V141H42ZM74,115L102,112V141H74ZM42,145H70V170L42,166ZM74,145H102V174L74,170Z" fill="#fff"/>
<circle cx="224" cy="137" r="14" fill="none" stroke="#fff" stroke-width="3"/><path d="M213,149L193,166" stroke="#fff" stroke-width="4"/>
<g fill="none" stroke="#fff" stroke-width="3"><rect x="342" y="131" width="25" height="25"/><path d="M337,122H368M337,165H368"/><path d="M377,120V128M377,134V141M377,147V162" stroke-width="5"/></g>
<path d="M480,120H510L518,127H546V172H480Z" fill="#F6D77E"/><path d="M480,120H510L516,128H480Z" fill="#E8B93A"/><rect x="484" y="122" width="24" height="4" fill="#fff"/>
<path d="M492,173V159L513,145L534,159V173H522V162H504V173Z" fill="#3AAAE0"/>
<path d="M625,118L665,110V178L625,170Z" fill="#2B579A"/><rect x="665" y="118" width="28" height="54" fill="#fff"/><path d="M668,126H690M668,134H690M668,142H690M668,150H690M668,158H690" stroke="#2B579A" stroke-width="3"/>
<text x="630" y="155" font-size="30" font-weight="bold" fill="#fff">W</text>
<path d="M772,118L812,110V178L772,170Z" fill="#D24726"/><rect x="812" y="118" width="28" height="54" fill="#fff"/><path d="M816,128A14,14 0 1 0 835,142H822V128Z" fill="#D24726"/>
<text x="777" y="157" font-size="34" font-weight="bold" fill="#fff">P</text>
</g>
<g transform="translate(966,700) scale(.33333)" fill="none">
<path d="M303,153L319,136L335,153" stroke="#fff" stroke-width="3"/>
<rect x="375" y="120" width="36" height="48" rx="16" fill="#1E7FE0"/><path d="M385,135L401,153L393,161V127L401,135L385,153" stroke="#fff" stroke-width="3"/>
<circle cx="465" cy="135" r="11" stroke="#1AA0E0" stroke-width="7"/><path d="M465,146V168" stroke="#1AA0E0" stroke-width="7"/>
<rect x="518" y="136" width="38" height="21" stroke="#fff" stroke-width="3"/><rect x="522" y="140" width="24" height="13" fill="#fff"/><rect x="557" y="142" width="3" height="9" fill="#fff"/>
<path d="M596,163C598,148 612,134 628,132M604,163C606,152 616,142 628,140M612,163C614,157 620,150 628,148" stroke="#8A96A2" stroke-width="2.500"/><circle cx="625" cy="160" r="4" fill="#fff"/>
<path d="M659,137H667L680,127V163L667,153H659Z" stroke="#fff" stroke-width="3"/><path d="M686,136C690,141 690,149 686,154M692,131C699,139 699,151 692,159M698,126C708,138 708,152 698,164" stroke="#fff" stroke-width="2.500"/>
<path d="M1061,123H1105V155H1092L1083,165V155H1061Z" stroke="#fff" stroke-width="3"/>
</g>
<text class="w" x="1212" y="753" textLength="22" lengthAdjust="spacingAndGlyphs">ҚАЗ</text>
<text class="w" x="1260" y="742" textLength="26" lengthAdjust="spacingAndGlyphs">16:01</text>
<text class="w" x="1247" y="761" textLength="54" lengthAdjust="spacingAndGlyphs">28.11.2022</text>
</svg>
</body></html>
